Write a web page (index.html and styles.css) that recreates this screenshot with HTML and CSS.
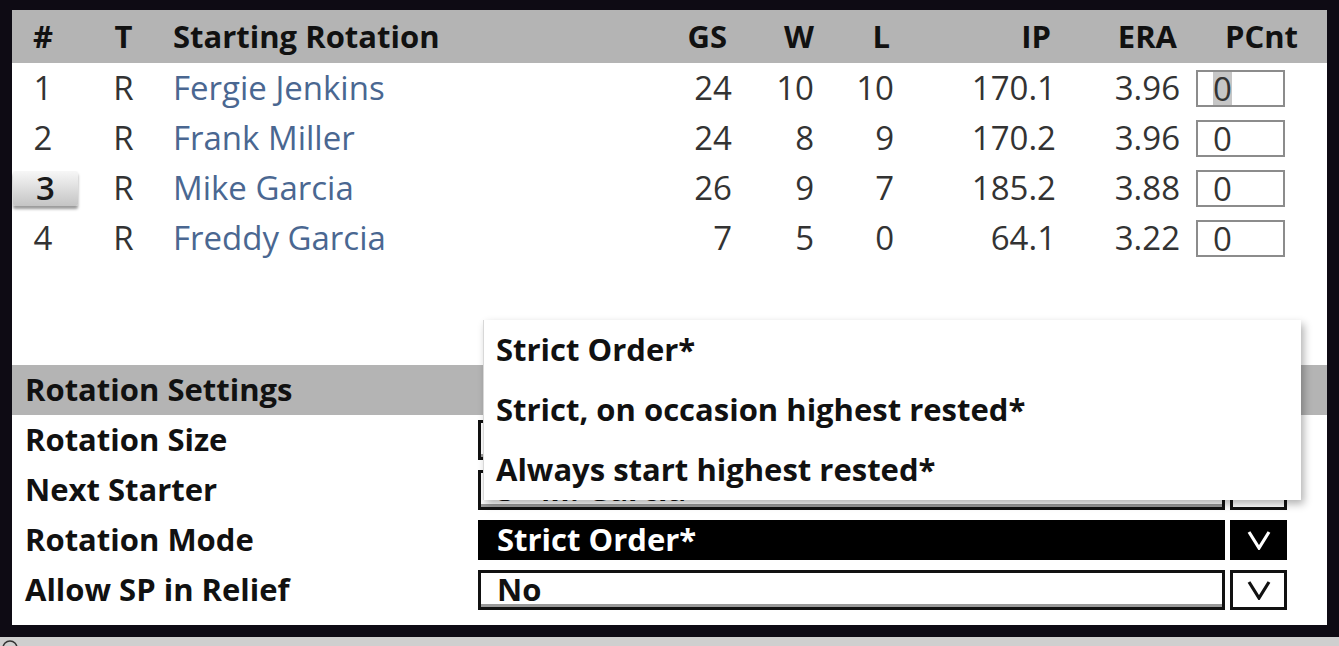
FILE: index.html
```html
<!DOCTYPE html>
<html>
<head>
<meta charset="utf-8">
<link rel="stylesheet" href="styles.css">
</head>
<body>
<div class="frame">
  <div class="panel">
    <div class="grid head">
      <div class="ctr">#</div>
      <div class="ctr">T</div>
      <div class="name">Starting Rotation</div>
      <div class="r p5">GS</div>
      <div class="r">W</div>
      <div class="r p4">L</div>
      <div class="r p5">IP</div>
      <div class="r p3">ERA</div>
      <div class="pch">PCnt</div>
    </div>
    <div class="grid row">
      <div class="ctr">1</div>
      <div class="ctr">R</div>
      <div class="name link">Fergie Jenkins</div>
      <div class="r">24</div>
      <div class="r">10</div>
      <div class="r">10</div>
      <div class="r">170.1</div>
      <div class="r">3.96</div>
      <div class="pc"><span class="inp"><span class="caret">0</span></span></div>
    </div>
    <div class="grid row">
      <div class="ctr">2</div>
      <div class="ctr">R</div>
      <div class="name link">Frank Miller</div>
      <div class="r">24</div>
      <div class="r">8</div>
      <div class="r">9</div>
      <div class="r">170.2</div>
      <div class="r">3.96</div>
      <div class="pc"><span class="inp">0</span></div>
    </div>
    <div class="grid row">
      <div class="numbtn"><span class="btn">3</span></div>
      <div class="ctr">R</div>
      <div class="name link">Mike Garcia</div>
      <div class="r">26</div>
      <div class="r">9</div>
      <div class="r">7</div>
      <div class="r">185.2</div>
      <div class="r">3.88</div>
      <div class="pc"><span class="inp">0</span></div>
    </div>
    <div class="grid row">
      <div class="ctr">4</div>
      <div class="ctr">R</div>
      <div class="name link">Freddy Garcia</div>
      <div class="r">7</div>
      <div class="r">5</div>
      <div class="r">0</div>
      <div class="r">64.1</div>
      <div class="r">3.22</div>
      <div class="pc"><span class="inp">0</span></div>
    </div>

    <div class="sec-head">Rotation Settings</div>
    <div class="srow">
      <div class="lbl">Rotation Size</div>
      <div class="field">4</div>
      <div class="arrow"><svg width="24" height="20" viewBox="0 0 24 20"><polyline points="2,2 12,18 22,2" fill="none" stroke="#111" stroke-width="3.2"/></svg></div>
    </div>
    <div class="srow">
      <div class="lbl">Next Starter</div>
      <div class="field">3 - M. Garcia</div>
      <div class="arrow"><svg width="24" height="20" viewBox="0 0 24 20"><polyline points="2,2 12,18 22,2" fill="none" stroke="#111" stroke-width="3.2"/></svg></div>
    </div>
    <div class="srow">
      <div class="lbl">Rotation Mode</div>
      <div class="field dark">Strict Order*</div>
      <div class="arrow dark"><svg width="24" height="20" viewBox="0 0 24 20"><polyline points="2,2 12,18 22,2" fill="none" stroke="#fff" stroke-width="3.2"/></svg></div>
    </div>
    <div class="srow">
      <div class="lbl">Allow SP in Relief</div>
      <div class="field">No</div>
      <div class="arrow"><svg width="24" height="20" viewBox="0 0 24 20"><polyline points="2,2 12,18 22,2" fill="none" stroke="#111" stroke-width="3.2"/></svg></div>
    </div>

    <div class="popup">
      <div class="opt">Strict Order*</div>
      <div class="opt">Strict, on occasion highest rested*</div>
      <div class="opt">Always start highest rested*</div>
    </div>
  </div>
</div>
<div class="foot"><svg width="24" height="9" viewBox="0 0 24 9"><circle cx="10" cy="8" r="7" fill="none" stroke="#333" stroke-width="1.5"/></svg></div>
</body>
</html>
```
FILE: styles.css
```css
html, body {
  margin: 0;
  padding: 0;
  background: #cfcfcf;
}
body {
  font-family: "Open Sans", "Noto Sans", sans-serif;
  font-size: 33px;
  line-height: 1.2;
  width: 1339px;
  height: 646px;
  overflow: hidden;
}
.frame {
  background: #0e0b14;
  padding: 10px 12px 12px 12px;
}
.panel {
  position: relative;
  background: #fff;
  height: 615px;
}
.grid {
  display: grid;
  grid-template-columns: 62px 99px 470px 89px 82px 80px 162px 124px 147px;
  align-items: center;
}
.head {
  height: 53px;
  background: #b4b4b4;
  font-weight: 700;
  font-size: 31px;
  color: #111;
}
.row {
  height: 50px;
  color: #333;
}
.ctr { text-align: center; }
.r { text-align: right; }
.p3 { padding-right: 3px; }
.p4 { padding-right: 4px; }
.p5 { padding-right: 5px; }
.link { color: #4a6791; }
.pch {
  text-align: right;
  padding-right: 29px;
}
.pc {
  padding-left: 16px;
  display: flex;
}
.inp {
  display: flex;
  align-items: stretch;
  width: 89px;
  height: 37px;
  box-sizing: border-box;
  border: 2px solid #8c8c8c;
  padding-left: 15px;
  line-height: 33px;
}
.caret {
  background: #c6c6c6;
}
.numbtn {
  display: flex;
  padding-left: 1px;
}
.btn {
  flex: 0 0 65px;
  width: 65px;
  height: 35px;
  display: flex;
  align-items: center;
  justify-content: center;
  background: linear-gradient(#f7f7f7, #c4c4c4);
  box-shadow: 0 3px 3px rgba(0, 0, 0, 0.4);
  border-radius: 2px;
  color: #1a1a1a;
  font-weight: 600;
}
.sec-head {
  margin-top: 102px;
  height: 50px;
  background: #b4b4b4;
  font-weight: 700;
  font-size: 31px;
  color: #111;
  padding-left: 13px;
  display: flex;
  align-items: center;
}
.srow {
  display: grid;
  grid-template-columns: 461px 747px 57px;
  column-gap: 5px;
  height: 50px;
  align-items: center;
  font-size: 31px;
}
.lbl {
  padding-left: 13px;
  font-weight: 700;
  color: #111;
}
.field {
  height: 40px;
  box-sizing: border-box;
  border: 3px solid #111;
  background: #fff;
  display: flex;
  align-items: center;
  padding-left: 16px;
  font-weight: 700;
  color: #111;
  box-shadow: inset 0 -3px 0 #9a9a9a;
}
.field.dark {
  background: #000;
  color: #fff;
  box-shadow: none;
  border-color: #000;
}
.arrow {
  height: 40px;
  box-sizing: border-box;
  border: 3px solid #111;
  background: #fff;
  display: flex;
  align-items: center;
  justify-content: center;
}
.arrow.dark {
  background: #000;
  border-color: #000;
}
.popup {
  position: absolute;
  left: 471px;
  top: 310px;
  width: 817px;
  height: 180px;
  background: #fff;
  border-left: 1px solid #d8d8d8;
  box-shadow: 3px 4px 8px rgba(0, 0, 0, 0.3);
  font-size: 31px;
}
.opt {
  height: 60px;
  display: flex;
  align-items: center;
  padding-left: 12px;
  font-weight: 700;
  color: #111;
}
.foot {
  height: 9px;
  overflow: hidden;
  line-height: 0;
}
```
